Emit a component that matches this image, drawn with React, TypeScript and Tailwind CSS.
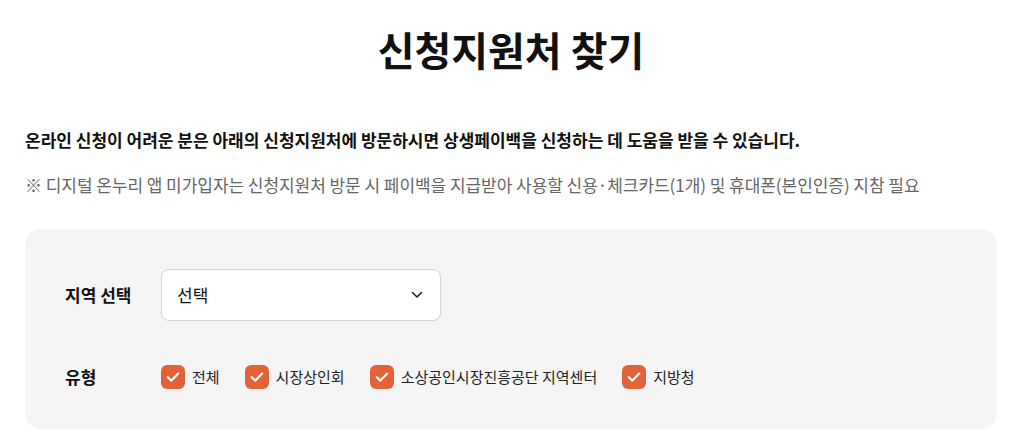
import React from "react";

const Check = () => (
  <span className="flex h-6 w-6 shrink-0 items-center justify-center rounded-[6px] bg-[#e2633a]">
    <svg width="24" height="24" viewBox="0 0 24 24" fill="none">
      <path d="M6.8 12.2 L10.4 15.6 L17.2 8.6" stroke="#fff" strokeWidth="2.2" strokeLinecap="round" strokeLinejoin="round" />
    </svg>
  </span>
);

const items = ["전체", "시장상인회", "소상공인시장진흥공단 지역센터", "지방청"];

export default function App() {
  return (
    <div
      className="min-h-[444px] w-full bg-white text-[#111]"
      style={{ fontFamily: '"Noto Sans CJK KR", "Noto Sans", sans-serif' }}
    >
      <div className="ml-[25px] w-[972px]">
        <h1 className="pt-[20px] text-center text-[40px] font-bold leading-[58px] text-[#111]">
          신청지원처 찾기
        </h1>
        <p className="mt-[49px] text-[17px] font-bold leading-[26px] text-[#111]">
          온라인 신청이 어려운 분은 아래의 신청지원처에 방문하시면 상생페이백을 신청하는 데 도움을 받을 수 있습니다.
        </p>
        <p className="mt-[19px] text-[17px] leading-[26px] tracking-[-0.05px] text-[#666]">
          ※ 디지털 온누리 앱 미가입자는 신청지원처 방문 시 페이백을 지급받아 사용할 신용·체크카드(1개) 및 휴대폰(본인인증) 지참 필요
        </p>
        <div className="mt-[31px] flex flex-col gap-[44px] rounded-[16px] bg-[#f5f5f5] px-10 py-10">
          <div className="flex items-center">
            <div className="w-[96px] text-[17px] font-bold">지역 선택</div>
            <div className="flex h-[52px] w-[280px] items-center justify-between rounded-[8px] border border-[#d5d5d5] bg-white pl-[15px] pr-[17px]">
              <span className="text-[17px] text-[#111]">선택</span>
              <svg width="12" height="8" viewBox="0 0 12 8" fill="none">
                <path d="M1.5 1.5 L6 6 L10.5 1.5" stroke="#222" strokeWidth="1.6" strokeLinecap="round" strokeLinejoin="round" />
              </svg>
            </div>
          </div>
          <div className="flex h-6 items-center">
            <div className="w-[96px] text-[17px] font-bold">유형</div>
            <div className="flex items-center gap-[25px]">
              {items.map((t) => (
                <label key={t} className="flex items-center gap-[7px]">
                  <Check />
                  <span className="text-[15px] text-[#222]">{t}</span>
                </label>
              ))}
            </div>
          </div>
        </div>
      </div>
    </div>
  );
}
